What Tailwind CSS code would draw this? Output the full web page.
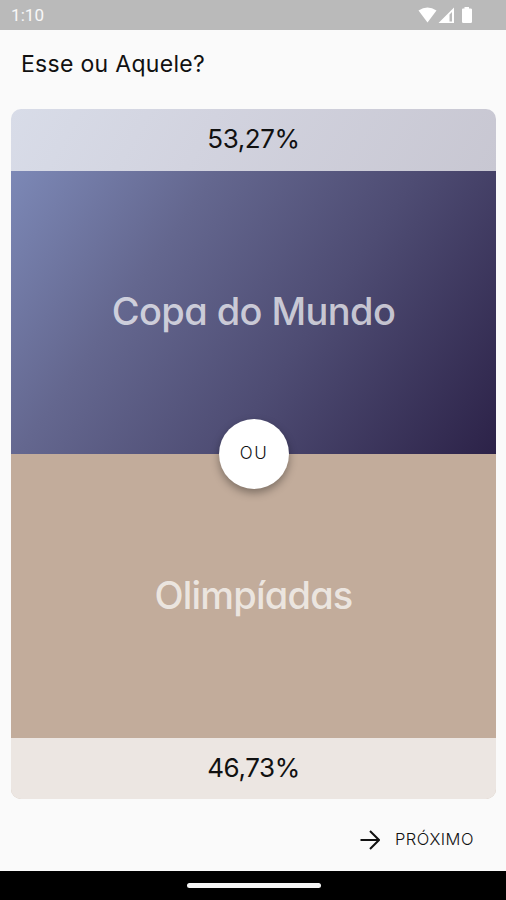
<!DOCTYPE html>
<html lang="pt-BR">
<head>
  <meta charset="UTF-8" />
  <meta name="viewport" content="width=device-width, initial-scale=1.0" />
  <title>Esse ou Aquele?</title>
  <script src="https://cdn.jsdelivr.net/npm/@tailwindcss/browser@4"></script>
</head>
<body class="bg-[#fafafa] text-[#111] font-['Inter',sans-serif] [font-feature-settings:'cv11'] h-[900px] flex flex-col overflow-hidden whitespace-nowrap">

  <!-- Status bar -->
  <div class="h-[30px] shrink-0 bg-[#bababa] text-white/90 flex items-center justify-between pl-[11px] pr-[32px]">
    <span class="font-[Roboto,sans-serif] text-[17px] tracking-[0.1px] pt-0.5">1:10</span>
    <svg class="w-[56px] h-[18px]" viewBox="0 0 56 18" fill="white">
      <path d="M0.5 4.500Q9.500-1.500 18.500 4.500L9.500 16.500Z" />
      <path fill-rule="evenodd" d="M20.500 17L36 1.500V17ZM31.500 8.500V15.500H34V6Z" />
      <path d="M44 3.500Q44 2.500 45 2.500H46.500V1H51V2.500H52.500Q54 2.500 54 3.500V16Q54 17 52.500 17H45.500Q44 17 44 16Z" />
    </svg>
  </div>

  <!-- Title -->
  <header class="h-[79px] shrink-0 pl-[21px] pt-[18px]">
    <h1 class="text-[23px] leading-8 tracking-[0.3px]">Esse ou Aquele?</h1>
  </header>

  <!-- Options -->
  <main class="relative ml-[11px] mr-2.5 h-[690px] shrink-0 rounded-[10px] overflow-hidden flex flex-col">
    <section class="h-[345px] flex flex-col">
      <div class="h-[61.500px] bg-linear-[120deg,#d8dce8_0%,#d2d3df_40%,#c8c7d2_100%] flex items-center justify-center text-[26px] tracking-[-0.4px]">
        <span class="-mt-0.5">53,27%</span>
      </div>
      <div class="flex-1 bg-linear-[125deg,#7c88b6_0%,#64678f_30%,#4e4c73_60%,#2c2248_100%] flex items-center justify-center text-[38px] text-white/70 font-medium tracking-[-0.6px]">
        <span class="-mt-0.5">Copa do Mundo</span>
      </div>
    </section>
    <section class="h-[345px] flex flex-col bg-[#c2ac9b]">
      <div class="flex-1 flex items-center justify-center text-[38px] text-white/70 font-medium tracking-[-0.8px]">
        <span>Olimpíadas</span>
      </div>
      <div class="h-[61.500px] bg-[#fafafa]/75 flex items-center justify-center text-[26px] tracking-[-0.4px]">
        <span class="-mt-0.5">46,73%</span>
      </div>
    </section>
    <div class="absolute left-[242.500px] top-1/2 -translate-x-1/2 -translate-y-1/2 size-[70px] rounded-full bg-white shadow-[0_4px_8px_rgba(0,0,0,0.35)] flex items-center justify-center text-[17px] font-light tracking-[1.500px] pl-px">OU</div>
  </main>

  <!-- Next button -->
  <footer class="flex-1 flex items-center justify-end pr-8 pt-[9px]">
    <button class="flex items-center gap-[15px] text-[16.500px] font-light tracking-[0.5px]">
      <svg class="w-5 h-5" viewBox="0 0 20 20" fill="none" stroke="currentColor" stroke-width="2">
        <path d="M0.500 10H18M10 1L19 10L10 19" />
      </svg>
      <span>PRÓXIMO</span>
    </button>
  </footer>

  <!-- Gesture bar -->
  <div class="h-[29px] shrink-0 bg-black flex items-center justify-center">
    <div class="w-[134px] h-[5px] rounded-full bg-[#f5f5f5] ml-px"></div>
  </div>
</body>
</html>
